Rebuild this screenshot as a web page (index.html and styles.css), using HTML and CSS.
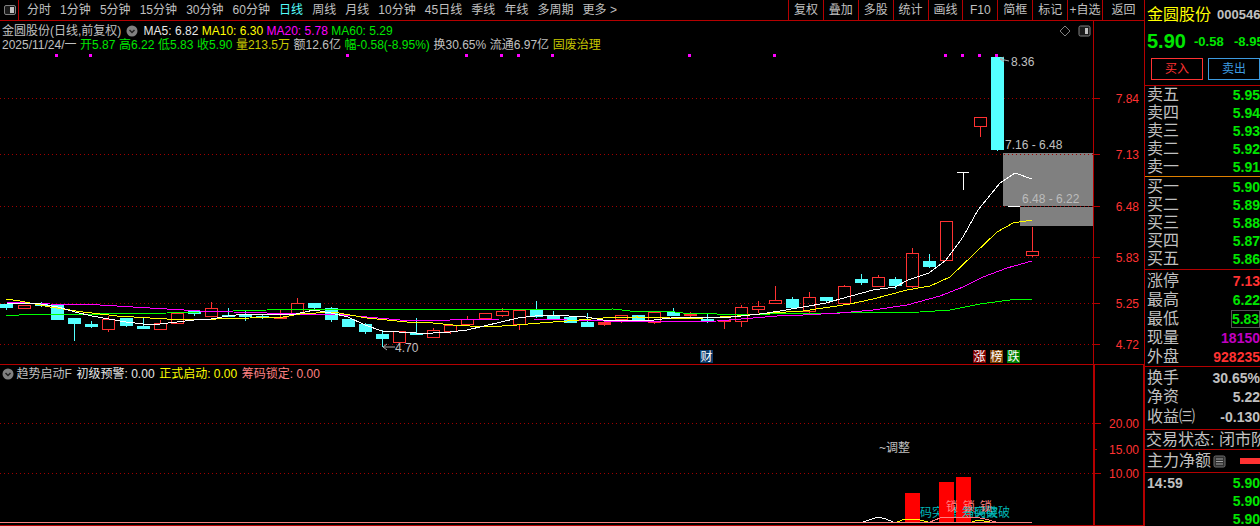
FILE: index.html
```html
<!DOCTYPE html>
<html lang="zh">
<head>
<meta charset="utf-8">
<title>金圆股份</title>
<link rel="stylesheet" href="styles.css">
</head>
<body>
<div class="app">
  <div class="left">
    <div class="toolbar">
      <div class="tool-icon">
        <svg width="14" height="14" viewBox="0 0 14 14"><rect x="1.5" y="2.5" width="11" height="9" rx="1.5" class="ic-frame"/><rect x="7" y="4" width="4" height="6" class="ic-fill"/></svg>
      </div>
      <div class="tabs">
        <span>分时</span><span>1分钟</span><span>5分钟</span><span>15分钟</span><span>30分钟</span><span>60分钟</span><span class="active">日线</span><span>周线</span><span>月线</span><span>10分钟</span><span>45日线</span><span>季线</span><span>年线</span><span>多周期</span><span>更多 &gt;</span>
      </div>
      <div class="actions">
        <span>复权</span><span>叠加</span><span>多股</span><span>统计</span><span>画线</span><span>F10</span><span>简框</span><span>标记</span><span>+自选</span><span class="back">返回</span>
      </div>
    </div>

    <div class="pane pane-main">
      <svg class="chart" width="1144" height="343" viewBox="0 21 1144 343">
        <rect class="box" x="1003" y="153" width="90" height="53"/>
        <rect class="box" x="1020" y="207" width="73" height="19"/>
        <path class="grid" d="M0 98.500H1094M0 154.500H1094M0 206.500H1094M0 257.500H1094M0 303.500H1094M0 344.500H1094"/>
        <path class="axis" d="M1093.500 21V364M1094 98.500h6M1094 154.500h6M1094 206.500h6M1094 257.500h6M1094 303.500h6M1094 344.500h6"/>
        <path class="dots" d="M55 54h3v3h-3zM89 54h3v3h-3zM346 54h3v3h-3zM465 54h3v3h-3zM500 54h3v3h-3zM517 54h3v3h-3zM551 54h3v3h-3zM688 54h3v3h-3zM773 54h3v3h-3zM944 54h3v3h-3zM961 54h3v3h-3zM978 54h3v3h-3zM995 54h3v3h-3z"/>
        <path class="cd-cyan" d="M0.500 304.500h12v3h-12zM6.500 307V310M35.500 304.500h12v1h-12zM41.500 302V307M51.500 305.500h12v14h-12zM68.500 318.500h12v5h-12zM74.500 323V341M85.500 324.500h12v2h-12zM91.500 321V328M120.500 318.500h12v7h-12zM126.500 325V327M137.500 326.500h12v2h-12zM143.500 318V329M188.500 311.500h12v2h-12zM194.500 313V316M222.500 315.500h12v1h-12zM228.500 308V315M239.500 315.500h12v1h-12zM245.500 311V321M256.500 316.500h12v1h-12zM262.500 314V319M308.500 303.500h12v4h-12zM314.500 307V310M325.500 308.500h12v11h-12zM331.500 307V322M342.500 319.500h12v7h-12zM348.500 326V327M359.500 324.500h12v7h-12zM365.500 323V334M376.500 334.500h12v4h-12zM382.500 330V347M410.500 333.500h12v1h-12zM416.500 318V333M530.500 310.500h12v6h-12zM536.500 301V318M547.500 315.500h12v3h-12zM553.500 311V319M564.500 317.500h12v5h-12zM570.500 322V323M581.500 322.500h12v4h-12zM587.500 313V327M632.500 315.500h12v5h-12zM638.500 320V322M667.500 312.500h12v3h-12zM673.500 308V316M701.500 319.500h12v1h-12zM707.500 314V323M786.500 299.500h12v8h-12zM792.500 297V308M820.500 297.500h12v3h-12zM826.500 300V303M855.500 279.500h12v3h-12zM861.500 274V285M889.500 279.500h12v6h-12zM895.500 277V289M923.500 261.500h12v5h-12zM929.500 254V268M991.500 57.500h12v92h-12zM997.500 149V151"/>
        <path class="cd-red" d="M18.500 305.500h12v3h-12zM102.500 319.500h12v10h-12zM108.500 316V319M108.500 330V332M154.500 323.500h12v6h-12zM160.500 320V323M171.500 313.500h12v10h-12zM177.500 312V313M205.500 308.500h12v8h-12zM211.500 302V308M280.500 310V318M274.500 317.500h12v1h-12zM291.500 303.500h12v10h-12zM297.500 298V303M393.500 331.500h12v11h-12zM427.500 330.500h12v7h-12zM433.500 328V330M444.500 325.500h12v6h-12zM450.500 332V334M461.500 319.500h12v5h-12zM467.500 316V319M467.500 325V326M479.500 313.500h12v5h-12zM485.500 319V320M496.500 311.500h12v4h-12zM502.500 308V311M502.500 316V317M513.500 310.500h12v14h-12zM519.500 325V330M598.500 322.500h12v2h-12zM598.500 323.500h12M604.500 325V326M615.500 315.500h12v4h-12zM621.500 320V323M648.500 312.500h12v10h-12zM654.500 323V324M684.500 314.500h12v1h-12zM690.500 312V317M718.500 320.500h12v1h-12zM724.500 322V329M735.500 307.500h12v14h-12zM741.500 305V307M741.500 322V327M752.500 306.500h12v3h-12zM758.500 301V306M758.500 310V313M769.500 300.500h12v3h-12zM775.500 286V300M803.500 297.500h12v14h-12zM809.500 292V297M809.500 312V313M838.500 286.500h12v17h-12zM844.500 285V286M872.500 277.500h12v9h-12zM878.500 275V277M906.500 253.500h12v33h-12zM912.500 248V253M912.500 287V288M940.500 221.500h12v39h-12zM974.500 117.500h12v9h-12zM980.500 127V137M1026.500 251.500h12v4h-12zM1032.500 227V251M1032.500 256V257"/>
        <path class="cd-white" d="M957 172.500h12M963.500 172V190M1008 206.500h12"/>
        <polyline class="ma ma60" points="6,316 33,314 100,314 167,313 200,312 267,310 300,309.500 580,309.500 613,309 630,311 667,311 683,313 717,314 770,314 837,313 920,312 950,310 980,304 1010,300 1032,299"/>
        <polyline class="ma ma20" points="7,302 50,304 100,305 133,307 167,309 200,311 233,312 267,313 300,314 333,314 367,317 400,320 450,320 500,319 533,319 567,320 603,321 670,322 717,321 753,318 777,316 803,315 840,313 873,310 907,305 940,296 963,287 983,277 1007,268 1032,261"/>
        <polyline class="ma ma10" points="6,299 20,301 50,307 83,312 117,316 150,318 183,320 217,319 250,318 283,317 300,314 333,312 367,318 407,322 433,323 453,325 487,327 517,325 540,323 567,321 603,318 637,317 670,318 703,318 737,316 770,313 803,311 830,307 850,304 873,299 907,290 930,286 950,277 973,255 997,232 1013,223 1032,220"/>
        <polyline class="ma ma5" points="6,303 41,304 58,307 75,312 92,316 109,319 126,322 143,324 160,324 177,322 194,320 211,319 228,316 245,314 262,314 279,315 296,314 314,310 331,313 348,317 365,325 382,331 399,332 416,333 433,333 450,332 467,330 484,326 501,322 518,318 535,316 552,315 569,316 586,317 603,320 620,320 637,321 654,320 671,318 688,317 705,317 722,318 741,316 760,314 780,311 803,307 826,303 840,299 873,290 895,287 908,280 929,273 946,260 963,237 978,210 1000,183 1015,173 1032,179"/>
        <path class="note-line" d="M1000 59l9 2M1000 59l4-2M1000 59l4 3M383 347h12M383 347l4-3M383 347l4 3"/>
        <text class="note" x="1011" y="66">8.36</text>
        <text class="note" x="1005" y="149">7.16 - 6.48</text>
        <text class="note-soft" x="1022" y="203">6.48 - 6.22</text>
        <text class="note" x="395" y="352">4.70</text>
        <text class="scale" x="1139" y="103">7.84</text>
        <text class="scale" x="1139" y="159">7.13</text>
        <text class="scale" x="1139" y="211">6.48</text>
        <text class="scale" x="1139" y="262">5.83</text>
        <text class="scale" x="1139" y="308">5.25</text>
        <text class="scale" x="1139" y="349">4.72</text>
        <rect class="tag-cai" x="700" y="350" width="13" height="13"/>
        <rect class="tag-zhang" x="973" y="350" width="13" height="13"/>
        <rect class="tag-bang" x="990" y="350" width="13" height="13"/>
        <rect class="tag-die" x="1007" y="350" width="13" height="13"/>
        <text class="tag" x="700.500" y="361">财</text>
        <text class="tag" x="973.500" y="361">涨</text>
        <text class="tag" x="990.500" y="361">榜</text>
        <text class="tag" x="1007.500" y="361">跌</text>
        <path class="diamond" d="M1065 26l5 5-5 5-5-5z"/>
        <rect class="ic-frame" x="1079" y="26" width="11" height="10" rx="1.500"/>
        <rect class="ic-fill" x="1085" y="28" width="3" height="6"/>
      </svg>
      <div class="legend">
        <div class="legend-row">
          <span class="c-soft">金圆股份(日线,前复权)</span>
          <svg class="chev" width="12" height="12" viewBox="0 0 12 12"><circle cx="6" cy="6" r="5.500" class="chev-bg"/><path d="M3.500 5L6 7.500 8.500 5" class="chev-mark"/></svg>
          <span class="ma-item c-white">MA5: 6.82</span>
          <span class="c-yellow">MA10: 6.30</span>
          <span class="c-magenta">MA20: 5.78</span>
          <span class="c-green">MA60: 5.29</span>
        </div>
        <div class="legend-row tight">
          <span class="c-soft">2025/11/24/一</span>
          <span class="c-green">开5.87</span>
          <span class="c-green">高6.22</span>
          <span class="c-green">低5.83</span>
          <span class="c-green">收5.90</span>
          <span class="c-olive">量213.5万</span>
          <span class="c-soft">额12.6亿</span>
          <span class="c-green">幅-0.58(-8.95%)</span>
          <span class="c-soft">换30.65%</span>
          <span class="c-soft">流通6.97亿</span>
          <span class="c-olive">固废治理</span>
        </div>
      </div>
    </div>

    <div class="pane pane-sub">
      <svg class="chart" width="1144" height="161" viewBox="0 365 1144 161">
        <path class="grid" d="M0 423.500H1094M0 473.500H1094"/>
        <path class="axis-thick" d="M1094 365V526M1144 365V526"/>
        <path class="axis" d="M1094 423.500h7M1094 449.500h3M1094 473.500h7M0 525.500H1144"/>
        <text class="note" x="879" y="452">~调整</text>
        <text class="teal" x="908" y="517">筹码突破</text>
        <text class="teal" x="950" y="517">筹码突破</text>
        <rect class="bar" x="905" y="493" width="15" height="30"/>
        <rect class="bar" x="939" y="482" width="15" height="41"/>
        <rect class="bar" x="956" y="477" width="15" height="46"/>
        <text class="teal" x="962" y="517">筹码突破</text>
        <polyline class="ma ma5" points="863,522 872,519 878,517 886,519 893,522"/>
        <polyline class="ma ma10" points="897,522 905,519 920,520 928,522 972,522 978,520 990,522 996,522"/>
        <polyline class="ma pink" points="930,522 940,518 945,517 975,517 985,519 996,522"/>
        <text class="lock" x="946" y="511">锁</text>
        <text class="lock" x="963" y="511">锁</text>
        <text class="lock" x="980" y="511">锁</text>
        <path class="base" d="M0 522.500H1032"/>
        <text class="scale" x="1139" y="428">20.00</text>
        <text class="scale" x="1139" y="454">15.00</text>
        <text class="scale" x="1139" y="478">10.00</text>
      </svg>
      <div class="legend legend-sub">
        <div class="legend-row wide">
          <svg class="chev" width="12" height="12" viewBox="0 0 12 12"><circle cx="6" cy="6" r="5.500" class="chev-bg"/><path d="M3.500 5L6 7.500 8.500 5" class="chev-mark"/></svg>
          <span class="c-soft">趋势启动F</span>
          <span class="c-white">初级预警: 0.00</span>
          <span class="c-yellow">正式启动: 0.00</span>
          <span class="c-pink">筹码锁定: 0.00</span>
        </div>
      </div>
    </div>
  </div>

  <aside class="panel">
    <div class="head">
      <div class="name-row"><span class="name">金圆股份</span><span class="code">000546</span></div>
      <div class="price-row"><span class="price">5.90</span><span class="delta">-0.58</span><span class="delta">-8.95%</span></div>
      <div class="btn-row"><span class="btn btn-buy">买入</span><span class="btn btn-sell">卖出</span></div>
    </div>
    <div class="book book-sell">
      <div class="row"><span>卖五</span><b class="c-green">5.95</b></div>
      <div class="row"><span>卖四</span><b class="c-green">5.94</b></div>
      <div class="row"><span>卖三</span><b class="c-green">5.93</b></div>
      <div class="row"><span>卖二</span><b class="c-green">5.92</b></div>
      <div class="row"><span>卖一</span><b class="c-green">5.91</b></div>
    </div>
    <div class="book book-buy">
      <div class="row"><span>买一</span><b class="c-green">5.90</b></div>
      <div class="row"><span>买二</span><b class="c-green">5.89</b></div>
      <div class="row"><span>买三</span><b class="c-green">5.88</b></div>
      <div class="row"><span>买四</span><b class="c-green">5.87</b></div>
      <div class="row"><span>买五</span><b class="c-green">5.86</b></div>
    </div>
    <div class="stats">
      <div class="row"><span>涨停</span><b class="c-red">7.13</b></div>
      <div class="row"><span>最高</span><b class="c-green">6.22</b></div>
      <div class="row"><span>最低</span><b class="c-green boxed">5.83</b></div>
      <div class="row"><span>现量</span><b class="c-purple">18150</b></div>
      <div class="row"><span>外盘</span><b class="c-red">928235</b></div>
    </div>
    <div class="stats stats-two">
      <div class="row"><span>换手</span><b class="c-grey">30.65%</b></div>
      <div class="row"><span>净资</span><b class="c-grey">5.22</b></div>
      <div class="row"><span>收益㈢</span><b class="c-grey">-0.130</b></div>
    </div>
    <div class="state">交易状态: 闭市阶段</div>
    <div class="flow">
      <span class="flow-label">主力净额</span>
      <svg class="flow-svg" width="13" height="13" viewBox="0 0 13 13"><rect x="1" y="1" width="11" height="11" rx="1.500" class="flow-ic"/><path d="M3 4h7M3 6.500h7M3 9h7" class="flow-ln"/></svg>
      <i class="flow-bar"></i>
    </div>
    <div class="ticks">
      <div class="row"><b class="c-grey">14:59</b><b class="c-green">5.90</b></div>
      <div class="row"><b></b><b class="c-green">5.90</b></div>
      <div class="row"><b></b><b class="c-green">5.90</b></div>
    </div>
  </aside>
</div>
</body>
</html>
```
FILE: styles.css
```css
* { box-sizing: border-box; }
html, body { margin: 0; height: 526px; overflow: hidden; background: #000; }
body { font: 12px/1 "Liberation Sans", "Noto Sans CJK SC", sans-serif; color: #c0c0c0; }

.app { display: flex; width: 1260px; height: 526px; overflow: hidden; }
.left { width: 1144px; flex: none; display: flex; flex-direction: column; }

/* toolbar */
.toolbar { height: 21px; flex: none; display: flex; border-bottom: 1px solid #b40000; }
.tool-icon { width: 19px; flex: none; display: flex; align-items: center; justify-content: center; border-right: 1px solid #b40000; padding-left: 2px; }
.ic-frame { fill: #1a1a1a; stroke: #808080; stroke-width: 1; }
.ic-fill { fill: #c0c0c0; }
.tabs { display: flex; align-items: center; gap: 9.1px; padding-left: 8px; white-space: nowrap; }
.tabs .active { color: #54ffff; }
.actions { margin-left: auto; display: flex; }
.actions span { width: 34.9px; display: flex; align-items: center; justify-content: center; border-left: 1px solid #b40000; white-space: nowrap; }
.actions .back { width: 42px; }

/* chart panes */
.pane { position: relative; flex: none; }
.pane-main { height: 344px; border-bottom: 1px solid #b40000; }
.pane-sub { height: 161px; }
.chart { display: block; }
.legend { position: absolute; left: 2px; top: 3px; }
.legend-sub { top: 2px; }
.legend-row { display: flex; align-items: center; gap: 3.4px; height: 14px; white-space: nowrap; }
.legend-row.tight { gap: 3.6px; }
.legend-row.wide { gap: 4.6px; }
.chev-bg { fill: #808080; }
.chev-mark { fill: none; stroke: #222; stroke-width: 1.500; }
.chev { flex: none; }
.legend-row.wide .chev + span { margin-left: -2px; }
.legend-row .chev + .ma-item { margin-left: 2px; }
.legend-row > .chev { margin-left: 1.5px; }
.legend-row.wide > .chev { margin-left: 0; }

.c-soft { color: #c0c0c0; }
.c-white { color: #e8e8e8; }
.c-yellow { color: #ffff00; }
.c-magenta { color: #ff00ff; }
.c-green { color: #00e600; }
.c-olive { color: #c8c800; }
.c-pink { color: #ff8080; }
.c-red { color: #ff3232; }
.c-purple { color: #c000c0; }
.c-grey { color: #c0c0c0; }

.grid { stroke: #a00000; stroke-width: 1; stroke-dasharray: 1 3; fill: none; shape-rendering: crispEdges; }
.axis { stroke: #b40000; stroke-width: 1; fill: none; shape-rendering: crispEdges; }
.axis-thick { stroke: #b40000; stroke-width: 2; fill: none; shape-rendering: crispEdges; }
.box { fill: #808080; }
.dots { fill: #ff00ff; }
.cd-cyan { fill: #54ffff; stroke: #54ffff; stroke-width: 1; shape-rendering: crispEdges; }
.cd-red { fill: none; stroke: #ff3232; stroke-width: 1; shape-rendering: crispEdges; }
.cd-white { fill: none; stroke: #fff; stroke-width: 1; shape-rendering: crispEdges; }
.ma { fill: none; stroke-width: 1; shape-rendering: crispEdges; }
.ma5 { stroke: #fff; }
.ma10 { stroke: #ffff00; }
.ma20 { stroke: #ff00ff; }
.ma60 { stroke: #00ff00; }
.pink { stroke: #ff8080; }
.note-line { fill: none; stroke: #a8a8a8; stroke-width: 1; }
.note { fill: #c0c0c0; font-size: 12px; }
.note-soft { fill: #bcbcbc; font-size: 12px; }
.scale { fill: #ff3232; font-size: 12px; text-anchor: end; }
.tag { fill: #fff; font-size: 12px; }
.tag-cai { fill: #0a3a6a; }
.tag-zhang { fill: #800000; }
.tag-bang { fill: #804000; }
.tag-die { fill: #008000; }
.diamond { fill: none; stroke: #808080; stroke-width: 1; }
.bar { fill: #ff0000; }
.base { stroke: #ff8080; stroke-width: 1; shape-rendering: crispEdges; }
.teal { fill: #00b8b8; font-size: 12px; }
.lock { fill: #ff8080; font-size: 12px; }

/* side panel */
.panel { width: 116px; flex: none; border-left: 1px solid #b40000; display: flex; flex-direction: column; overflow: hidden; }
.head { height: 86px; flex: none; border-bottom: 1px solid #b40000; padding-left: 2px; white-space: nowrap; }
.name-row { height: 29px; display: flex; align-items: center; gap: 6px; }
.name { font-size: 16px; color: #ffff00; flex: none; }
.code { font-size: 13px; font-weight: bold; color: #c0c0c0; flex: none; }
.price-row { height: 24px; display: flex; align-items: center; }
.price { font-size: 20px; font-weight: bold; color: #00e600; width: 47px; flex: none; }
.delta { font-size: 13px; font-weight: bold; color: #00e600; width: 40px; flex: none; }
.btn-row { display: flex; gap: 5px; padding: 5px 0 0 4px; }
.btn { width: 52px; height: 22px; flex: none; display: flex; align-items: center; justify-content: center; border: 1px solid; }
.btn-buy { color: #ff3232; border-color: #ff3232; }
.btn-sell { color: #3d9be0; border-color: #3d9be0; }

.row { display: flex; justify-content: space-between; align-items: center; padding: 0 0 0 2px; font-size: 16px; white-space: nowrap; }
.row b { font-size: 14px; font-weight: bold; }
.book { flex: none; }
.book .row { height: 18px; }
.book-sell { height: 91px; border-bottom: 1px solid #e08000; }
.book-buy { height: 93px; border-bottom: 1px solid #b40000; padding-top: 1px; }
.stats { flex: none; height: 97px; border-bottom: 1px solid #b40000; padding-top: 1px; }
.stats .row { height: 19px; }
.stats-two { height: 63px; padding-top: 1px; }
.stats-two .row { height: 19.500px; }
.boxed { border: 1px solid #555; height: 18px; width: 29px; display: flex; align-items: center; justify-content: center; }
.state { flex: none; height: 20px; font-size: 16px; line-height: 19px; padding-left: 1px; border-bottom: 1px solid #b40000; white-space: nowrap; }
.flow { flex: none; height: 23px; display: flex; align-items: center; gap: 2px; font-size: 16px; padding-left: 2px; border-bottom: 1px solid #b40000; white-space: nowrap; }
.flow-label, .flow-svg { flex: none; }
.flow-ic { fill: #303030; stroke: #707070; }
.flow-ln { stroke: #a0a0a0; stroke-width: 1; }
.flow-bar { width: 21px; height: 6px; margin-left: 12px; background: #ff3232; flex: none; }
.ticks { flex: none; padding-top: 1px; }
.ticks .row { height: 18px; }
```
